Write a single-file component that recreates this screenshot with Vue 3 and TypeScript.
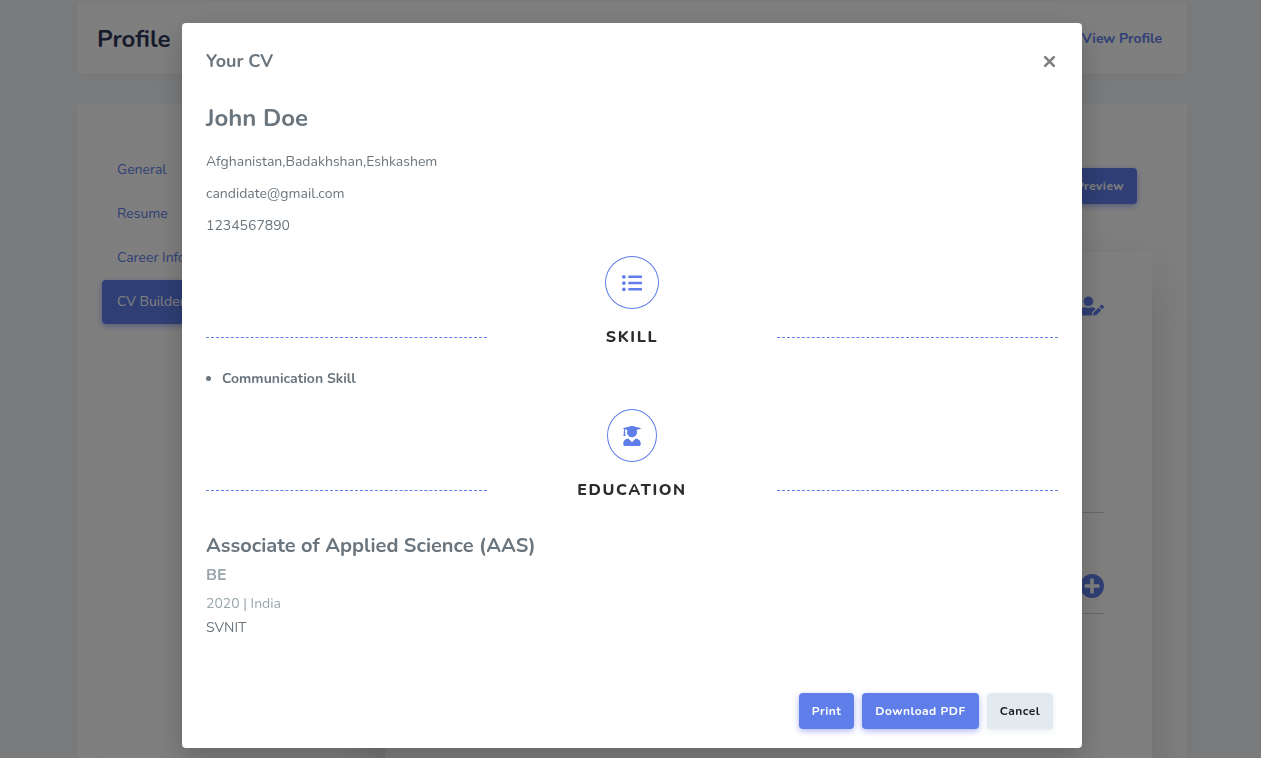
<script setup lang="ts">
interface NavItem {
  label: string
  active?: boolean
}

const navItems: NavItem[] = [
  { label: 'General' },
  { label: 'Resume' },
  { label: 'Career Info' },
  { label: 'CV Builder', active: true },
]

const contacts: string[] = ['Afghanistan,Badakhshan,Eshkashem', 'candidate@gmail.com', '1234567890']
const skills: string[] = ['Communication Skill']
</script>

<template>
  <div class="page">
    <header class="page-header">
      <h1>Profile</h1>
      <a href="#profile">View Profile</a>
    </header>
    <main class="panel">
      <div class="panel-inner">
        <nav class="side-nav" aria-label="Profile sections">
          <a
            v-for="item in navItems"
            :key="item.label"
            href="#section"
            class="nav-link"
            :class="{ active: item.active }"
            >{{ item.label }}</a
          >
        </nav>
        <section class="builder">
          <div class="toolbar">
            <button type="button" class="btn primary">Preview</button>
          </div>
          <div class="sheet">
            <div class="sheet-row first">
              <button type="button" class="icon-btn" aria-label="Edit personal details">
                <svg class="edit-icon" viewBox="0 0 640 512" aria-hidden="true">
                  <path
                    d="M224 256c70.7 0 128-57.3 128-128S294.7 0 224 0 96 57.3 96 128s57.3 128 128 128zm89.6 32h-16.7c-22.2 10.2-46.9 16-72.9 16s-50.6-5.8-72.9-16h-16.7C60.2 288 0 348.2 0 422.4V464c0 26.5 21.5 48 48 48h274.9c-2.4-6.8-3.4-14-2.6-21.3l6.8-60.9 1.2-11.1 7.9-7.9 77.3-77.3c-24.5-27.7-60-45.5-99.9-45.5zm45.3 145.3l-6.8 61c-1.1 10.2 7.5 18.8 17.6 17.6l60.9-6.8 137.9-137.9-71.7-71.7-137.9 137.8zM633 268.9L595.1 231c-9.3-9.3-24.5-9.3-33.8 0l-37.8 37.8-4.1 4.1 71.8 71.7 41.8-41.8c9.3-9.4 9.3-24.5 0-33.9z"
                  />
                </svg>
              </button>
            </div>
            <div class="sheet-row">
              <button type="button" class="icon-btn" aria-label="Add entry">
                <svg class="add-icon" viewBox="0 0 24 24" aria-hidden="true">
                  <path
                    fill-rule="evenodd"
                    d="M12 0a12 12 0 1 0 0 24a12 12 0 0 0 0-24zM10.8 4.6h2.4a.6.6 0 0 1 .6.6v5h5a.6.6 0 0 1 .6.6v2.4a.6.6 0 0 1-.6.6h-5v5a.6.6 0 0 1-.6.6h-2.4a.6.6 0 0 1-.6-.6v-5h-5a.6.6 0 0 1-.6-.6v-2.4a.6.6 0 0 1 .6-.6h5v-5a.6.6 0 0 1 .6-.6z"
                  />
                </svg>
              </button>
            </div>
          </div>
        </section>
      </div>
    </main>
  </div>

  <div class="overlay">
    <div class="modal" role="dialog" aria-modal="true" aria-labelledby="cv-title">
      <header class="modal-header">
        <h2 id="cv-title">Your CV</h2>
        <button type="button" class="close" aria-label="Close">
          <svg viewBox="0 0 12 12" aria-hidden="true">
            <path d="M2 2l8 8M10 2l-8 8" />
          </svg>
        </button>
      </header>

      <div class="modal-body">
        <h3 class="name">John Doe</h3>
        <p v-for="line in contacts" :key="line" class="contact">{{ line }}</p>

        <div class="badge">
          <svg class="list-icon" viewBox="0 0 512 512" aria-hidden="true">
            <path
              d="M48 48a48 48 0 1 0 48 48 48 48 0 0 0-48-48zm0 160a48 48 0 1 0 48 48 48 48 0 0 0-48-48zm0 160a48 48 0 1 0 48 48 48 48 0 0 0-48-48zm448 16H176a16 16 0 0 0-16 16v32a16 16 0 0 0 16 16h320a16 16 0 0 0 16-16v-32a16 16 0 0 0-16-16zm0-320H176a16 16 0 0 0-16 16v32a16 16 0 0 0 16 16h320a16 16 0 0 0 16-16V80a16 16 0 0 0-16-16zm0 160H176a16 16 0 0 0-16 16v32a16 16 0 0 0 16 16h320a16 16 0 0 0 16-16v-32a16 16 0 0 0-16-16z"
            />
          </svg>
        </div>
        <h4 class="divider">Skill</h4>
        <ul class="skills">
          <li v-for="skill in skills" :key="skill">{{ skill }}</li>
        </ul>

        <div class="badge narrow">
          <svg class="grad-icon" viewBox="0 0 448 512" aria-hidden="true">
            <path
              d="M319.4 320.6L224 416l-95.4-95.4C57.1 323.7 0 382.2 0 454.4v9.6c0 26.5 21.5 48 48 48h352c26.5 0 48-21.5 48-48v-9.6c0-72.2-57.1-130.7-128.6-133.8zM13.6 79.8l6.4 1.5v58.4c-7 4.2-12 11.5-12 20.3 0 8.4 4.6 15.4 11.1 19.7L3.5 242c-1.7 6.9 2.1 14 7.6 14h41.8c5.5 0 9.3-7.1 7.6-14l-15.6-62.3C51.4 175.4 56 168.4 56 160c0-8.8-5-16.1-12-20.3V87.1l66 15.9c-8.6 17.2-14 36.4-14 57 0 70.7 57.3 128 128 128s128-57.3 128-128c0-20.6-5.3-39.8-14-57l96.3-23.2c18.2-4.4 18.2-27.1 0-31.5l-190.4-46c-13-3.1-26.7-3.1-39.7 0L13.6 48.2c-18.1 4.4-18.1 27.2 0 31.6z"
            />
          </svg>
        </div>
        <h4 class="divider">Education</h4>
        <article class="education">
          <h4>Associate of Applied Science (AAS)</h4>
          <h5>BE</h5>
          <p class="muted">2020 | India</p>
          <p>SVNIT</p>
        </article>
      </div>

      <footer class="modal-footer">
        <button type="button" class="btn primary">Print</button>
        <button type="button" class="btn primary">Download PDF</button>
        <button type="button" class="btn light">Cancel</button>
      </footer>
    </div>
  </div>
</template>

<style>
body {
  margin: 0;
  background: #f4f6f9;
  overflow: hidden;
}
</style>

<style scoped>
.page,
.overlay {
  box-sizing: border-box;
  font-family: Nunito, Lato, 'Open Sans', sans-serif;
  font-size: 14px;
  line-height: 24px;
  color: #6a757e;
}

h1,
h2,
h3,
h4,
h5,
p,
ul {
  margin: 0;
}

a {
  color: #5f7eea;
  text-decoration: none;
}

button {
  font-family: inherit;
  cursor: pointer;
}

svg {
  display: block;
  fill: #5f7eea;
}

.page {
  height: 100vh;
  overflow: hidden;
  padding: 3px 74px 0 77px;
}

.page-header {
  display: flex;
  align-items: center;
  justify-content: space-between;
  padding: 20px 25px 19px 20px;
  background: #fff;
  border-radius: 3px;
  box-shadow: 0 4px 8px rgba(0, 0, 0, 0.03);
}

.page-header h1 {
  font-size: 24px;
  line-height: 32px;
  color: #2f3757;
}

.page-header a {
  font-weight: 700;
}

.panel {
  margin-top: 30px;
  padding: 25px;
  background: #fff;
  border-radius: 3px;
  box-shadow: 0 4px 8px rgba(0, 0, 0, 0.03);
}

.panel-inner {
  display: flex;
  padding-top: 19px;
  border-radius: 3px;
  box-shadow: 0 4px 8px rgba(0, 0, 0, 0.03);
}

.side-nav {
  display: flex;
  flex-direction: column;
  flex: 0 0 22%;
}

.nav-link {
  padding: 10px 15px;
  border-radius: 4px;
}

.nav-link.active {
  color: #fff;
  background: #5f7eea;
  box-shadow: 0 2px 6px #acb5f6;
}

.builder {
  flex: 1;
  padding: 20px 10px 20px 50px;
}

.toolbar {
  display: flex;
  justify-content: flex-end;
  padding-right: 15px;
}

.sheet {
  margin-top: 48px;
  padding: 40px 48px;
  min-height: 540px;
  background: #fff;
  box-shadow: 0 20px 50px rgba(0, 0, 0, 0.16);
}

.sheet-row {
  display: flex;
  justify-content: flex-end;
  padding: 61px 0 15px;
  border-bottom: 1px solid #d0d0d0;
}

.sheet-row.first {
  min-height: 216px;
  padding: 4px 0 0;
  align-items: flex-start;
}

.icon-btn {
  padding: 0;
  border: 0;
  background: none;
}

.edit-icon {
  width: 24px;
  height: 20px;
}

.add-icon {
  width: 24px;
  height: 24px;
}

.btn {
  padding: 6px 13px;
  border: 0;
  border-radius: 4px;
  font-size: 12px;
  font-weight: 700;
  line-height: 24px;
  letter-spacing: 0.04em;
}

.btn.primary {
  color: #fff;
  background: #5f7eea;
  box-shadow: 0 2px 6px #acb5f6;
}

.btn.light {
  color: #191d21;
  background: #e3eaef;
  box-shadow: 0 2px 6px #e6ecf1;
}

.overlay {
  position: fixed;
  inset: 0;
  display: flex;
  justify-content: center;
  align-items: flex-start;
  padding: 23px 0 0 3px;
  background: rgba(0, 0, 0, 0.5);
}

.modal {
  width: 100%;
  max-width: 900px;
  background: #fff;
  border-radius: 4px;
  box-shadow: 0 10px 30px rgba(0, 0, 0, 0.22);
}

.modal-header {
  display: flex;
  align-items: center;
  justify-content: space-between;
  padding: 24px 26px 0 24px;
}

.modal-header h2 {
  font-size: 18px;
  line-height: 28px;
}

.close {
  padding: 0;
  border: 0;
  background: none;
}

.close svg {
  width: 13px;
  height: 13px;
  fill: none;
  stroke: #7f7f7f;
  stroke-width: 2.4;
  stroke-linecap: round;
}

.modal-body {
  padding: 29px 24px 0;
}

.name {
  margin-bottom: 18px;
  font-size: 24px;
  line-height: 28px;
}

.contact + .contact {
  margin-top: 8px;
}

.badge {
  display: flex;
  align-items: center;
  justify-content: center;
  box-sizing: border-box;
  width: 54px;
  height: 53px;
  margin: 18px auto 16px;
  border: 1px solid #5f7eea;
  border-radius: 50%;
}

.badge.narrow {
  width: 50px;
}

.list-icon {
  width: 20px;
  height: 20px;
}

.grad-icon {
  width: 18px;
  height: 20px;
}

.divider {
  display: flex;
  align-items: center;
  justify-content: space-between;
  font-size: 16px;
  font-weight: 800;
  line-height: 24px;
  letter-spacing: 0.1em;
  text-transform: uppercase;
  color: #2c2c2c;
}

.divider::before,
.divider::after {
  content: '';
  flex: 0 0 33%;
  border-top: 1px dashed #5f7eea;
}

.skills {
  margin-top: 18px;
  padding-left: 16px;
  font-weight: 700;
}

.education {
  margin-top: 30px;
}

.education h4 {
  font-size: 20px;
  line-height: 28px;
}

.education h5 {
  margin: 3px 0 5px;
  font-size: 16px;
  line-height: 24px;
  color: #98a6ad;
}

.education .muted {
  color: #98a6ad;
}

.modal-footer {
  display: flex;
  justify-content: flex-end;
  gap: 8px;
  padding: 53px 29px 19px;
}
</style>
